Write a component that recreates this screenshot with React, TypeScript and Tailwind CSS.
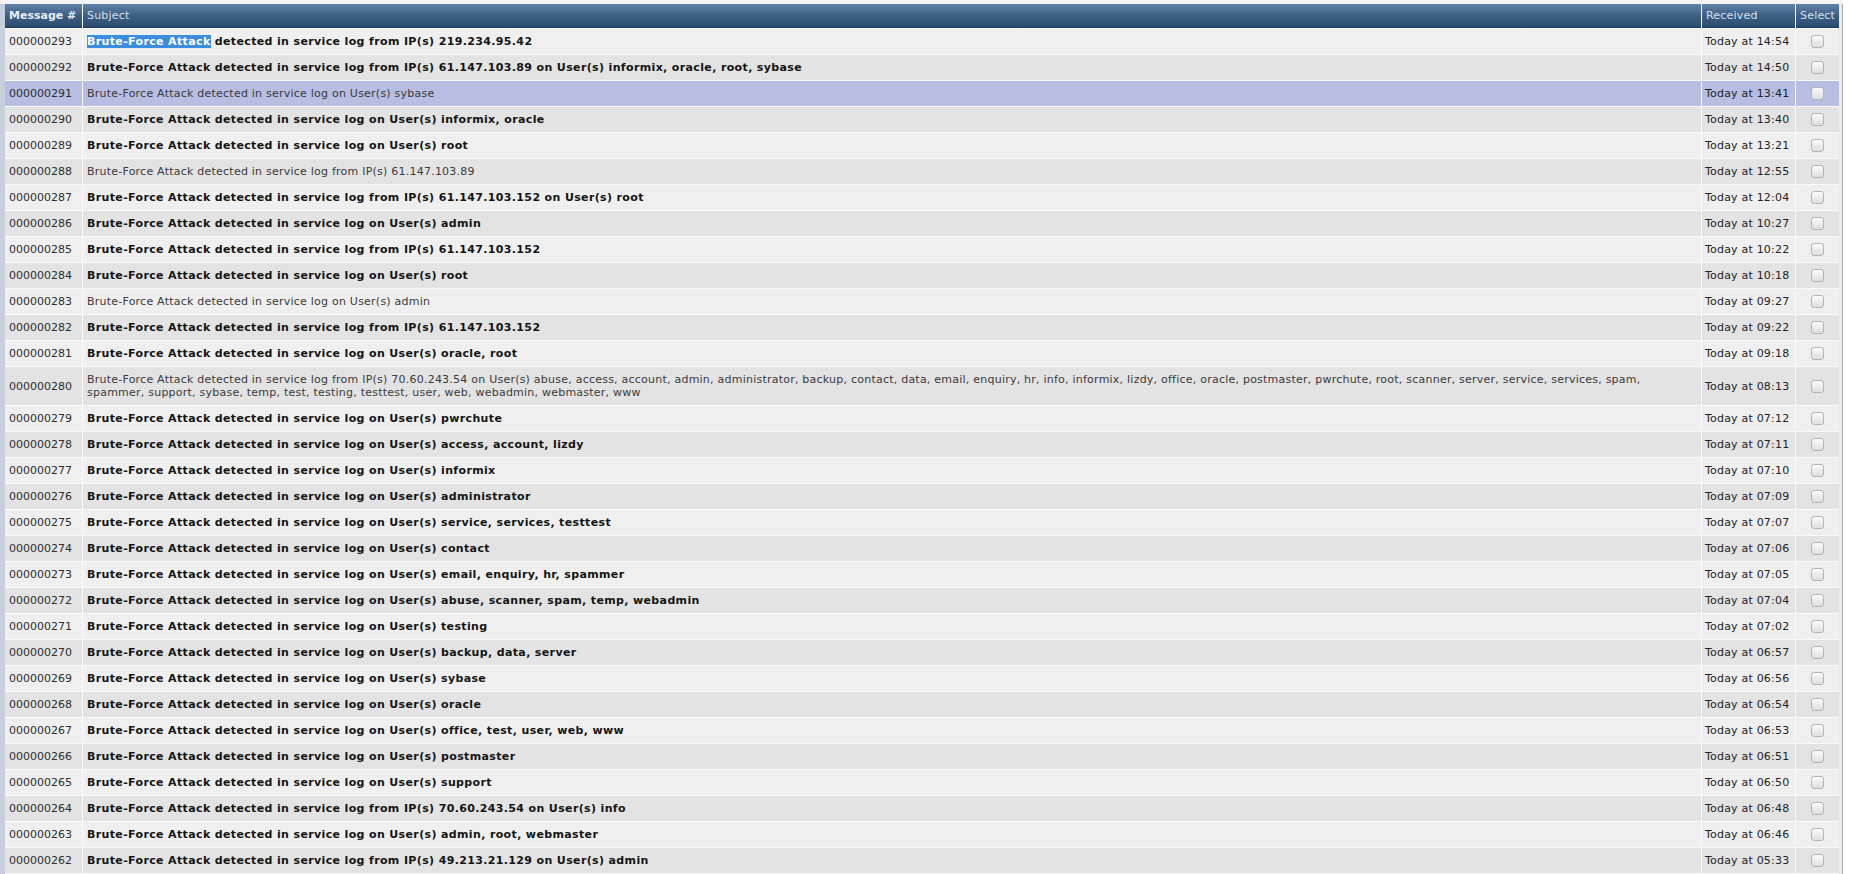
import React from 'react';

type Msg = {
  id: string;
  subject: React.ReactNode;
  received: string;
  unread: boolean;
  selected?: boolean;
  tall?: boolean;
};

const P = 'Brute-Force Attack detected in service log ';

const messages: Msg[] = [
  {
    id: '000000293',
    subject: (
      <>
        <span className="bg-[#3b8de0] text-white">Brute-Force Attack</span> detected in service log from IP(s) 219.234.95.42
      </>
    ),
    received: '14:54',
    unread: true,
  },
  { id: '000000292', subject: P + 'from IP(s) 61.147.103.89 on User(s) informix, oracle, root, sybase', received: '14:50', unread: true },
  { id: '000000291', subject: P + 'on User(s) sybase', received: '13:41', unread: false, selected: true },
  { id: '000000290', subject: P + 'on User(s) informix, oracle', received: '13:40', unread: true },
  { id: '000000289', subject: P + 'on User(s) root', received: '13:21', unread: true },
  { id: '000000288', subject: P + 'from IP(s) 61.147.103.89', received: '12:55', unread: false },
  { id: '000000287', subject: P + 'from IP(s) 61.147.103.152 on User(s) root', received: '12:04', unread: true },
  { id: '000000286', subject: P + 'on User(s) admin', received: '10:27', unread: true },
  { id: '000000285', subject: P + 'from IP(s) 61.147.103.152', received: '10:22', unread: true },
  { id: '000000284', subject: P + 'on User(s) root', received: '10:18', unread: true },
  { id: '000000283', subject: P + 'on User(s) admin', received: '09:27', unread: false },
  { id: '000000282', subject: P + 'from IP(s) 61.147.103.152', received: '09:22', unread: true },
  { id: '000000281', subject: P + 'on User(s) oracle, root', received: '09:18', unread: true },
  {
    id: '000000280',
    subject: (
      <>
        {P}from IP(s) 70.60.243.54 on User(s) abuse, access, account, admin, administrator, backup, contact, data, email, enquiry, hr, info, informix, lizdy, office, oracle, postmaster, pwrchute, root, scanner, server, service, services, spam,
        <br />
        spammer, support, sybase, temp, test, testing, testtest, user, web, webadmin, webmaster, www
      </>
    ),
    received: '08:13',
    unread: false,
    tall: true,
  },
  { id: '000000279', subject: P + 'on User(s) pwrchute', received: '07:12', unread: true },
  { id: '000000278', subject: P + 'on User(s) access, account, lizdy', received: '07:11', unread: true },
  { id: '000000277', subject: P + 'on User(s) informix', received: '07:10', unread: true },
  { id: '000000276', subject: P + 'on User(s) administrator', received: '07:09', unread: true },
  { id: '000000275', subject: P + 'on User(s) service, services, testtest', received: '07:07', unread: true },
  { id: '000000274', subject: P + 'on User(s) contact', received: '07:06', unread: true },
  { id: '000000273', subject: P + 'on User(s) email, enquiry, hr, spammer', received: '07:05', unread: true },
  { id: '000000272', subject: P + 'on User(s) abuse, scanner, spam, temp, webadmin', received: '07:04', unread: true },
  { id: '000000271', subject: P + 'on User(s) testing', received: '07:02', unread: true },
  { id: '000000270', subject: P + 'on User(s) backup, data, server', received: '06:57', unread: true },
  { id: '000000269', subject: P + 'on User(s) sybase', received: '06:56', unread: true },
  { id: '000000268', subject: P + 'on User(s) oracle', received: '06:54', unread: true },
  { id: '000000267', subject: P + 'on User(s) office, test, user, web, www', received: '06:53', unread: true },
  { id: '000000266', subject: P + 'on User(s) postmaster', received: '06:51', unread: true },
  { id: '000000265', subject: P + 'on User(s) support', received: '06:50', unread: true },
  { id: '000000264', subject: P + 'from IP(s) 70.60.243.54 on User(s) info', received: '06:48', unread: true },
  { id: '000000263', subject: P + 'on User(s) admin, root, webmaster', received: '06:46', unread: true },
  { id: '000000262', subject: P + 'from IP(s) 49.213.21.129 on User(s) admin', received: '05:33', unread: true },
];

function Checkbox() {
  return (
    <span className="block w-[13px] h-[13px] rounded-[3px] border border-[#b4b4b4] bg-gradient-to-b from-[#fbfbfb] to-[#dedede]" />
  );
}

export default function App() {
  return (
    <div className="flex h-[874px] overflow-hidden bg-white font-['DejaVu_Sans','Verdana',sans-serif] text-[11px] leading-[13px]">
      <div className="flex flex-1 flex-col bg-[#f4f4f4]">
        <div className="h-[4px] shrink-0" />
        <div className="flex flex-1">
          <div className="w-[5px] shrink-0 bg-[#c6d0dc]" />
          <div className="flex w-[1834px] flex-col gap-px bg-[#fafafa]">
            {/* Header */}
            <div className="grid h-[24px] shrink-0 grid-cols-[77px_1618px_93px_43px] gap-px">
              {[
                { label: 'Message #', bold: true },
                { label: 'Subject' },
                { label: 'Received' },
                { label: 'Select' },
              ].map(h => (
                <div
                  key={h.label}
                  className={`flex items-center border-b border-[#213a55] bg-gradient-to-b from-[#6383a8] via-[#3c5f86] to-[#2c4d70] pl-[4px] ${
                    h.bold ? 'font-bold text-[#e9eff6]' : 'text-[#d6e1ec] tracking-[0.2px]'
                  }`}
                >
                  {h.label}
                </div>
              ))}
            </div>

            {/* Rows */}
            {messages.map((m, i) => {
              const bg = m.selected ? 'bg-[#b7bee2]' : i % 2 === 0 ? 'bg-[#efefef]' : 'bg-[#e3e3e3]';
              return (
                <div
                  key={m.id}
                  className={`grid shrink-0 grid-cols-[77px_1618px_93px_43px] gap-px ${m.tall ? 'h-[38px]' : 'h-[25px]'}`}
                >
                  <div className={`flex items-center pl-[4px] text-[#2c2c2c] ${bg}`}>{m.id}</div>
                  <div
                    className={`flex items-center pl-[4px] ${bg} ${
                      m.unread ? 'font-bold text-[#141414] tracking-[0.36px]' : 'text-[#3a3a3a] tracking-[0.23px]'
                    }`}
                  >
                    <span>{m.subject}</span>
                  </div>
                  <div className={`flex items-center pl-[3px] text-[#222] tracking-[0.2px] ${bg}`}>Today at {m.received}</div>
                  <div className={`flex items-center justify-center ${bg}`}>
                    <Checkbox />
                  </div>
                </div>
              );
            })}
          </div>
          <div className="w-[3px] shrink-0 bg-[#ebebeb]" />
          <div className="w-px shrink-0 bg-[#a9a9a9]" />
        </div>
      </div>
      <div className="w-[6px] shrink-0 bg-white" />
    </div>
  );
}
